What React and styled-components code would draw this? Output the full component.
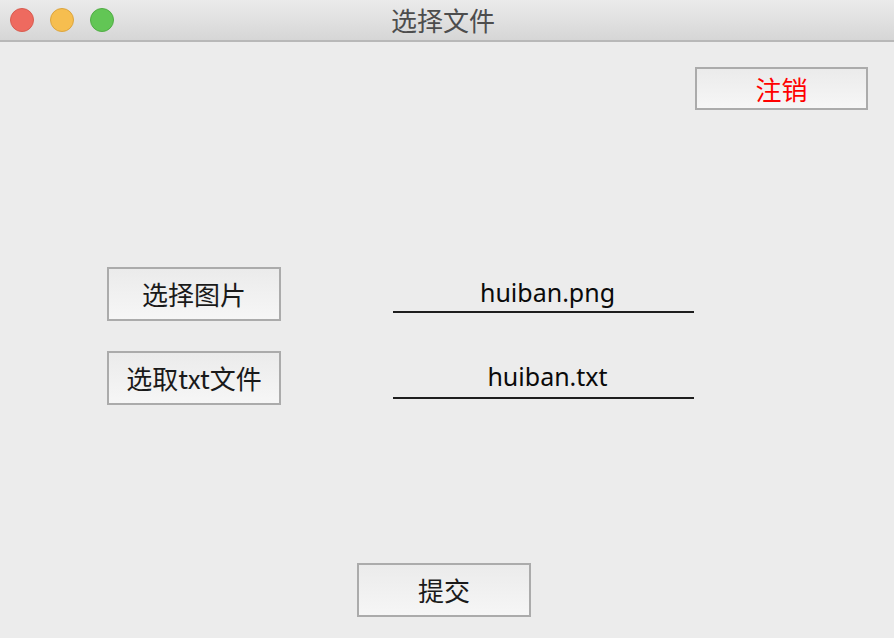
import React, { useState } from "react";
import styled, { createGlobalStyle } from "styled-components";

const GlobalStyle = createGlobalStyle`
  html, body {
    margin: 0;
    padding: 0;
    background: #ececec;
  }
  * {
    box-sizing: border-box;
  }
`;

const Window = styled.div`
  width: 894px;
  height: 638px;
  display: flex;
  flex-direction: column;
  background: #ececec;
  font-family: "Noto Sans", "Noto Sans CJK SC", sans-serif;
  overflow: hidden;
`;

const TitleBar = styled.div`
  position: relative;
  height: 42px;
  flex-shrink: 0;
  display: flex;
  align-items: center;
  justify-content: center;
  background: linear-gradient(#ebebeb, #d6d6d6);
  border-bottom: 2px solid #b8b8b8;
`;

const Lights = styled.div`
  position: absolute;
  left: 10px;
  top: 8px;
  display: flex;
  gap: 16px;
`;

const Light = styled.span`
  width: 24px;
  height: 24px;
  border-radius: 50%;
  background: ${(p) => p.color};
  border: 1px solid ${(p) => p.edge};
`;

const Title = styled.div`
  font-family: "Noto Sans CJK SC", sans-serif;
  font-size: 26px;
  color: #4d4d4d;
  line-height: 1;
  margin-right: 8px;
`;

const Body = styled.div`
  flex: 1;
  display: flex;
  flex-direction: column;
`;

const TopRow = styled.div`
  display: flex;
  justify-content: flex-end;
  padding: 25px 26px 0 0;
`;

const Button = styled.button`
  width: ${(p) => p.w || 174}px;
  height: ${(p) => p.h || 54}px;
  padding: 0;
  border: 2px solid #ababab;
  border-radius: 0;
  background: linear-gradient(#ebebeb, #f6f6f6);
  font-family: "Noto Sans CJK SC", sans-serif;
  font-size: 26px;
  font-weight: 400;
  line-height: 1;
  color: ${(p) => (p.danger ? "#ff0000" : "#1a1a1a")};
  display: flex;
  align-items: center;
  justify-content: center;
  cursor: pointer;
`;

const FileRow = styled.div`
  display: flex;
  align-items: flex-start;
  padding-left: 107px;
  gap: 112px;
  margin-top: ${(p) => p.top}px;
`;

const FileField = styled.div`
  width: 301px;
  height: ${(p) => p.h}px;
  display: flex;
  align-items: flex-end;
  justify-content: center;
  padding: 0 0 ${(p) => p.h - 40}px 8px;
  border-bottom: 2px solid #1e1e1e;
  font-family: "Noto Sans", "Noto Sans CJK SC", sans-serif;
  font-size: 25px;
  line-height: 1;
  color: #0a0a0a;
`;

const BottomRow = styled.div`
  display: flex;
  padding-left: 357px;
  margin-top: 158px;
`;

const App = () => {
  const [image] = useState("huiban.png");
  const [txt] = useState("huiban.txt");

  return (
    <Window>
      <GlobalStyle />
      <TitleBar>
        <Lights>
          <Light color="#ee6a5f" edge="#d85c50" />
          <Light color="#f6be4f" edge="#dca53e" />
          <Light color="#62c655" edge="#51ad45" />
        </Lights>
        <Title>选择文件</Title>
      </TitleBar>
      <Body>
        <TopRow>
          <Button danger w={173} h={43}>注销</Button>
        </TopRow>
        <FileRow top={157}>
          <Button>选择图片</Button>
          <FileField h={46}>{image}</FileField>
        </FileRow>
        <FileRow top={30}>
          <Button>选取txt文件</Button>
          <FileField h={48}>{txt}</FileField>
        </FileRow>
        <BottomRow>
          <Button>提交</Button>
        </BottomRow>
      </Body>
    </Window>
  );
};

export default App;
